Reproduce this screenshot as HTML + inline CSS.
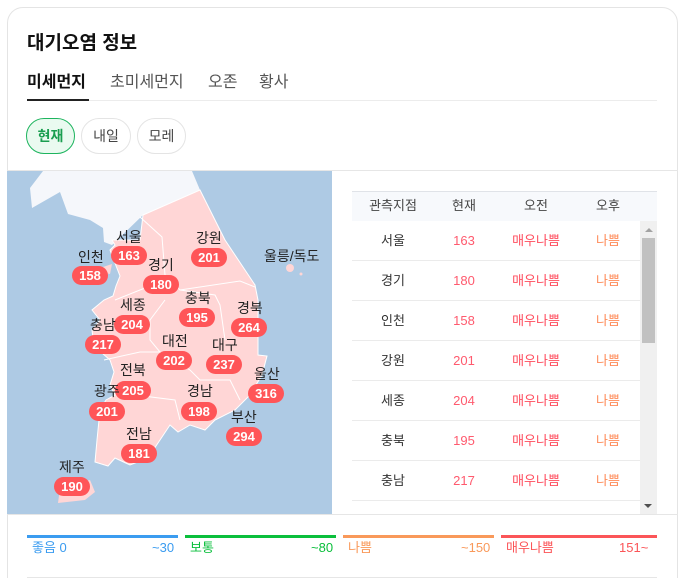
<!DOCTYPE html><html><head><meta charset="utf-8"><style>
*{margin:0;padding:0;box-sizing:border-box}
html,body{width:684px;height:578px;overflow:hidden}
body{background:#fff;font-family:"Liberation Sans","Noto Sans CJK KR",sans-serif;position:relative}
.card{position:absolute;left:7px;top:7px;width:671px;height:590px;border:1px solid #e4e4e4;border-radius:16px}
.abs{position:absolute}
.t{position:absolute;white-space:nowrap}
.tab{font-size:16px;color:#555;top:68px}
.pill{position:absolute;top:118px;height:36px;border:1px solid #e4e4e4;border-radius:18px;font-size:14px;color:#444;text-align:center;line-height:34px}
.b{position:absolute;background:#ff5558;color:#fff;font-weight:bold;font-size:13px;height:19px;line-height:19px;border-radius:10px;width:36px;text-align:center}
.l{position:absolute;font-size:14px;line-height:16px;color:#222;white-space:nowrap}
.row{position:absolute;left:352px;width:288px;height:40px;border-bottom:1px solid #ebebeb;font-size:13px;line-height:40px}
.row span{position:absolute;top:0;transform:translateX(-50%);line-height:40px}
.f{position:absolute;top:540px;font-size:13px;line-height:16px;white-space:nowrap}
</style></head><body>
<div class="card"></div>
<div class="t" style="left:27px;top:28px;font-size:19px;font-weight:bold;color:#111">대기오염 정보</div>
<div class="t tab" style="left:27px;color:#111;font-weight:bold">미세먼지</div>
<div class="t tab" style="left:110px">초미세먼지</div>
<div class="t tab" style="left:208px">오존</div>
<div class="t tab" style="left:259px">황사</div>
<div class="abs" style="left:27px;top:100px;width:630px;height:1px;background:#ececec"></div>
<div class="abs" style="left:27px;top:99px;width:62px;height:2px;background:#222"></div>
<div class="pill" style="left:26px;width:49px;border-color:#1db45e;background:#eafaf0;color:#1a9e50;font-weight:bold">현재</div>
<div class="pill" style="left:81px;width:50px">내일</div>
<div class="pill" style="left:137px;width:49px">모레</div>
<div class="abs" style="left:7px;top:170px;width:671px;height:1px;background:#e6e6e6"></div>
<svg class="abs" style="left:7px;top:171px" width="325" height="344" viewBox="7 171 325 344">
<rect x="7" y="171" width="325" height="344" fill="#aecae4"/>
<polygon fill="#f5f7fb" points="43,171 192,171 200,190 143,215 112,245 104,242 103,228 90,220 68,214 60,192 32,208 30,188"/>
<polygon fill="#ffd6d6" stroke="#fff" stroke-width="1" points="143,215 200,190 225,240 255,285 258,300 258,355 267,356 262,375 250,395 235,410 215,420 205,430 190,425 178,432 170,425 160,440 148,458 130,465 115,458 108,466 95,462 97,440 100,410 106,400 115,395 110,385 114,372 110,360 94,346 92,330 100,320 92,310 104,300 113,296 116,286 120,276 113,258 110,250 115,245 112,240 140,240"/>
<polygon fill="#ffd6d6" points="60,488 90,480 95,492 85,500 58,503"/>
<polygon fill="#ffd6d6" points="100,268 112,264 110,274 100,272"/>
<circle cx="290" cy="268" r="4" fill="#ffd6d6"/><circle cx="301" cy="274" r="1.5" fill="#ffd6d6"/>
<g fill="none" stroke="#fff" stroke-width="1"><path d="M140,217 L162,237 165,275 180,290 240,281 255,287"/><path d="M180,290 L215,295 220,305 225,340"/><path d="M115,300 L165,280"/><path d="M104,360 L140,352 160,352 190,370 200,380 230,380 240,400"/><path d="M135,395 L175,400 180,420"/><path d="M160,352 L150,340 150,320 165,300"/></g>
</svg>
<div class="l" style="left:116px;top:229px">서울</div><div class="b" style="left:111px;top:246px">163</div>
<div class="l" style="left:78px;top:249px">인천</div><div class="b" style="left:72px;top:266px">158</div>
<div class="l" style="left:148px;top:257px">경기</div><div class="b" style="left:143px;top:275px">180</div>
<div class="l" style="left:196px;top:230px">강원</div><div class="b" style="left:191px;top:248px">201</div>
<div class="l" style="left:264px;top:248px">울릉/독도</div>
<div class="l" style="left:185px;top:290px">충북</div><div class="b" style="left:179px;top:308px">195</div>
<div class="l" style="left:120px;top:297px">세종</div><div class="b" style="left:114px;top:315px">204</div>
<div class="l" style="left:237px;top:300px">경북</div><div class="b" style="left:231px;top:318px">264</div>
<div class="l" style="left:90px;top:317px">충남</div><div class="b" style="left:85px;top:335px">217</div>
<div class="l" style="left:162px;top:333px">대전</div><div class="b" style="left:156px;top:351px">202</div>
<div class="l" style="left:212px;top:337px">대구</div><div class="b" style="left:206px;top:355px">237</div>
<div class="l" style="left:120px;top:362px">전북</div><div class="b" style="left:115px;top:381px">205</div>
<div class="l" style="left:254px;top:366px">울산</div><div class="b" style="left:248px;top:384px">316</div>
<div class="l" style="left:94px;top:383px">광주</div><div class="b" style="left:89px;top:402px">201</div>
<div class="l" style="left:187px;top:383px">경남</div><div class="b" style="left:181px;top:402px">198</div>
<div class="l" style="left:231px;top:409px">부산</div><div class="b" style="left:226px;top:427px">294</div>
<div class="l" style="left:126px;top:426px">전남</div><div class="b" style="left:121px;top:444px">181</div>
<div class="l" style="left:59px;top:459px">제주</div><div class="b" style="left:54px;top:477px">190</div>
<div class="abs" style="left:352px;top:191px;width:305px;height:30px;background:#f7f9fc;border-top:1px solid #e0e3e8"></div>
<div class="row" style="top:191px;border:none;height:30px;color:#444;line-height:30px"><span style="left:41px;line-height:30px">관측지점</span><span style="left:112px;line-height:30px">현재</span><span style="left:184px;line-height:30px">오전</span><span style="left:256px;line-height:30px">오후</span></div>
<div class="row" style="top:221px"><span style="left:41px;color:#333">서울</span><span style="left:112px;color:#ff5a6e">163</span><span style="left:184px;color:#ff4d5e">매우나쁨</span><span style="left:256px;color:#ff8c5a">나쁨</span></div>
<div class="row" style="top:261px"><span style="left:41px;color:#333">경기</span><span style="left:112px;color:#ff5a6e">180</span><span style="left:184px;color:#ff4d5e">매우나쁨</span><span style="left:256px;color:#ff8c5a">나쁨</span></div>
<div class="row" style="top:301px"><span style="left:41px;color:#333">인천</span><span style="left:112px;color:#ff5a6e">158</span><span style="left:184px;color:#ff4d5e">매우나쁨</span><span style="left:256px;color:#ff8c5a">나쁨</span></div>
<div class="row" style="top:341px"><span style="left:41px;color:#333">강원</span><span style="left:112px;color:#ff5a6e">201</span><span style="left:184px;color:#ff4d5e">매우나쁨</span><span style="left:256px;color:#ff8c5a">나쁨</span></div>
<div class="row" style="top:381px"><span style="left:41px;color:#333">세종</span><span style="left:112px;color:#ff5a6e">204</span><span style="left:184px;color:#ff4d5e">매우나쁨</span><span style="left:256px;color:#ff8c5a">나쁨</span></div>
<div class="row" style="top:421px"><span style="left:41px;color:#333">충북</span><span style="left:112px;color:#ff5a6e">195</span><span style="left:184px;color:#ff4d5e">매우나쁨</span><span style="left:256px;color:#ff8c5a">나쁨</span></div>
<div class="row" style="top:461px"><span style="left:41px;color:#333">충남</span><span style="left:112px;color:#ff5a6e">217</span><span style="left:184px;color:#ff4d5e">매우나쁨</span><span style="left:256px;color:#ff8c5a">나쁨</span></div>
<div class="abs" style="left:640px;top:221px;width:17px;height:293px;background:#f0f0f0"></div>
<div class="abs" style="left:642px;top:238px;width:13px;height:105px;background:#c1c1c1"></div>
<div class="abs" style="left:645px;top:228px;width:0;height:0;border:4px solid transparent;border-bottom-color:#a3a3a3;border-top:none"></div>
<div class="abs" style="left:644px;top:504px;width:0;height:0;border:4px solid transparent;border-top-color:#505050;border-bottom:none"></div>
<div class="abs" style="left:7px;top:514px;width:671px;height:1px;background:#e6e6e6"></div>
<div class="abs" style="left:27px;top:535px;width:151px;height:3px;background:#3b9cf0"></div>
<div class="abs" style="left:185px;top:535px;width:151px;height:3px;background:#0bbf3c"></div>
<div class="abs" style="left:343px;top:535px;width:151px;height:3px;background:#f9995a"></div>
<div class="abs" style="left:501px;top:535px;width:156px;height:3px;background:#fb5558"></div>
<div class="f" style="left:32px;color:#3b9cf0">좋음 0</div><div class="f" style="left:152px;color:#3b9cf0">~30</div>
<div class="f" style="left:190px;color:#0bbf3c">보통</div><div class="f" style="left:311px;color:#0bbf3c">~80</div>
<div class="f" style="left:348px;color:#f9995a">나쁨</div><div class="f" style="left:461px;color:#f9995a">~150</div>
<div class="f" style="left:506px;color:#fb5558">매우나쁨</div><div class="f" style="left:619px;color:#fb5558">151~</div>
<div class="abs" style="left:27px;top:577px;width:630px;height:1px;background:#e6e6e6"></div>
</body></html>
